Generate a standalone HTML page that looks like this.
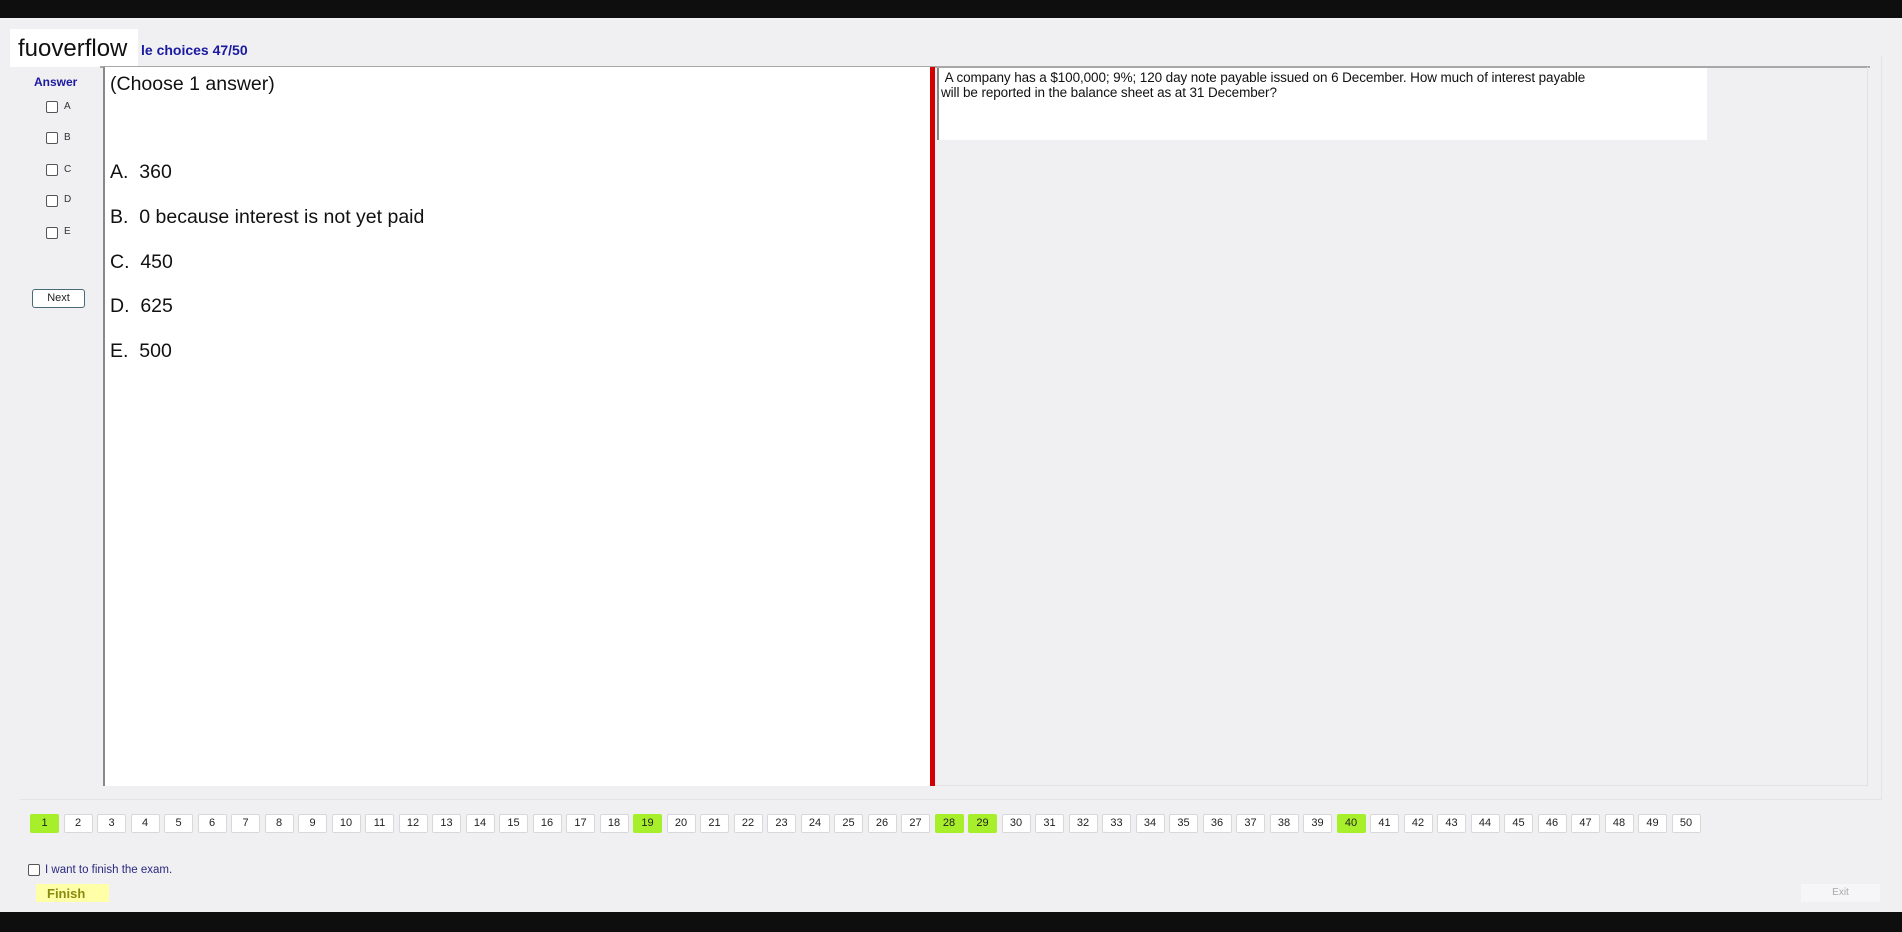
<!DOCTYPE html>
<html><head><meta charset="utf-8"><style>
*{margin:0;padding:0;box-sizing:border-box}
body{width:1902px;height:932px;background:#0e0e0e;font-family:"Liberation Sans",Arial,sans-serif;position:relative;overflow:hidden}
.page{position:absolute;left:0;top:18px;width:1902px;height:894px;background:#f0eff1}
.abs{position:absolute}
.logo{left:10px;top:11px;width:128px;height:38px;background:#fff;font-size:24px;color:#111;padding:6px 0 0 8px}
.title{left:141px;top:24px;font-size:14px;font-weight:bold;color:#1a1aa0}
.hline{left:100px;top:48px;width:1770px;height:2px;background:#a8a8a8}
.answer{left:34px;top:57px;font-size:12px;font-weight:bold;color:#1a1aa0}
.cb{width:12px;height:12px;border:1px solid #555;border-radius:2px;background:#fff}
.cbl{font-size:10px;color:#333}
.next{left:32px;top:271px;width:53px;height:19px;border:1px solid #4a6a7a;border-radius:3px;background:#fff;font-size:11px;text-align:center;line-height:17px;color:#222}
.left{left:103px;top:49px;width:827px;height:719px;background:#fff;border-left:2px solid #888}
.opt{left:110px;font-size:19.5px;color:#111}
.red{left:930px;top:49px;width:5px;height:719px;background:#d40000}
.q{left:937px;top:50px;width:770px;height:72px;background:#fff;border-left:2px solid #888;font-size:13.5px;color:#111;padding:2px 0 0 2px;line-height:15px;letter-spacing:-0.1px}
.rarea{left:935px;top:49px;width:933px;height:719px;border-right:1px solid #e2e2e2;border-bottom:1px solid #e2e2e2}
.outer{left:20px;top:38px;width:1862px;height:744px;border-right:1px solid #e4e4e4;border-bottom:1px solid #e4e4e4}
.num{top:796px;width:29px;height:19px;background:#fff;border:1px solid #d8d8d8;border-radius:2px;font-size:11px;text-align:center;line-height:17px;color:#222}
.num.g{background:#a6ef2a;border-color:#a6ef2a}
.fin{left:36px;top:866px;width:73px;height:18px;background:#ffffa8;font-size:13px;font-weight:bold;color:#8a8a10;padding:2px 0 0 11px}
.exit{left:1801px;top:866px;width:79px;height:18px;background:#f6f5f7;font-size:10px;color:#aaa;text-align:center;line-height:18px}
</style></head><body>
<div class="page">
<div class="abs outer"></div>
<div class="abs logo">fuoverflow</div>
<div class="abs title">le choices 47/50</div>
<div class="abs hline"></div>
<div class="abs answer">Answer</div>
<div class="abs cb" style="left:46px;top:83px"></div><div class="abs cbl" style="left:64px;top:83px">A</div>
<div class="abs cb" style="left:46px;top:114px"></div><div class="abs cbl" style="left:64px;top:114px">B</div>
<div class="abs cb" style="left:46px;top:146px"></div><div class="abs cbl" style="left:64px;top:146px">C</div>
<div class="abs cb" style="left:46px;top:177px"></div><div class="abs cbl" style="left:64px;top:176px">D</div>
<div class="abs cb" style="left:46px;top:209px"></div><div class="abs cbl" style="left:64px;top:208px">E</div>
<div class="abs next">Next</div>
<div class="abs left"></div>
<div class="abs opt" style="top:55px">(Choose 1 answer)</div>
<div class="abs opt" style="top:143px">A.&nbsp; 360</div>
<div class="abs opt" style="top:188px">B.&nbsp; 0 because interest is not yet paid</div>
<div class="abs opt" style="top:233px">C.&nbsp; 450</div>
<div class="abs opt" style="top:277px">D.&nbsp; 625</div>
<div class="abs opt" style="top:322px">E.&nbsp; 500</div>
<div class="abs rarea"></div>
<div class="abs red"></div>
<div class="abs q">&nbsp;A company has a $100,000; 9%; 120 day note payable issued on 6 December. How much of interest payable<br>will be reported in the balance sheet as at 31 December?</div>
<div id="nums"></div>
<div class="abs cb" style="left:28px;top:846px"></div>
<div class="abs" style="left:45px;top:846px;font-size:11.5px;color:#2a2a80">I want to finish the exam.</div>
<div class="abs fin">Finish</div>
<div class="abs exit">Exit</div>
</div>
<script>
var g=[1,19,28,29,40],h='';
for(var i=1;i<=50;i++){h+='<div class="abs num'+(g.indexOf(i)>=0?' g':'')+'" style="left:'+(30+(i-1)*33.5).toFixed(1)+'px">'+i+'</div>';}
document.getElementById('nums').innerHTML=h;
</script>
</body></html>
